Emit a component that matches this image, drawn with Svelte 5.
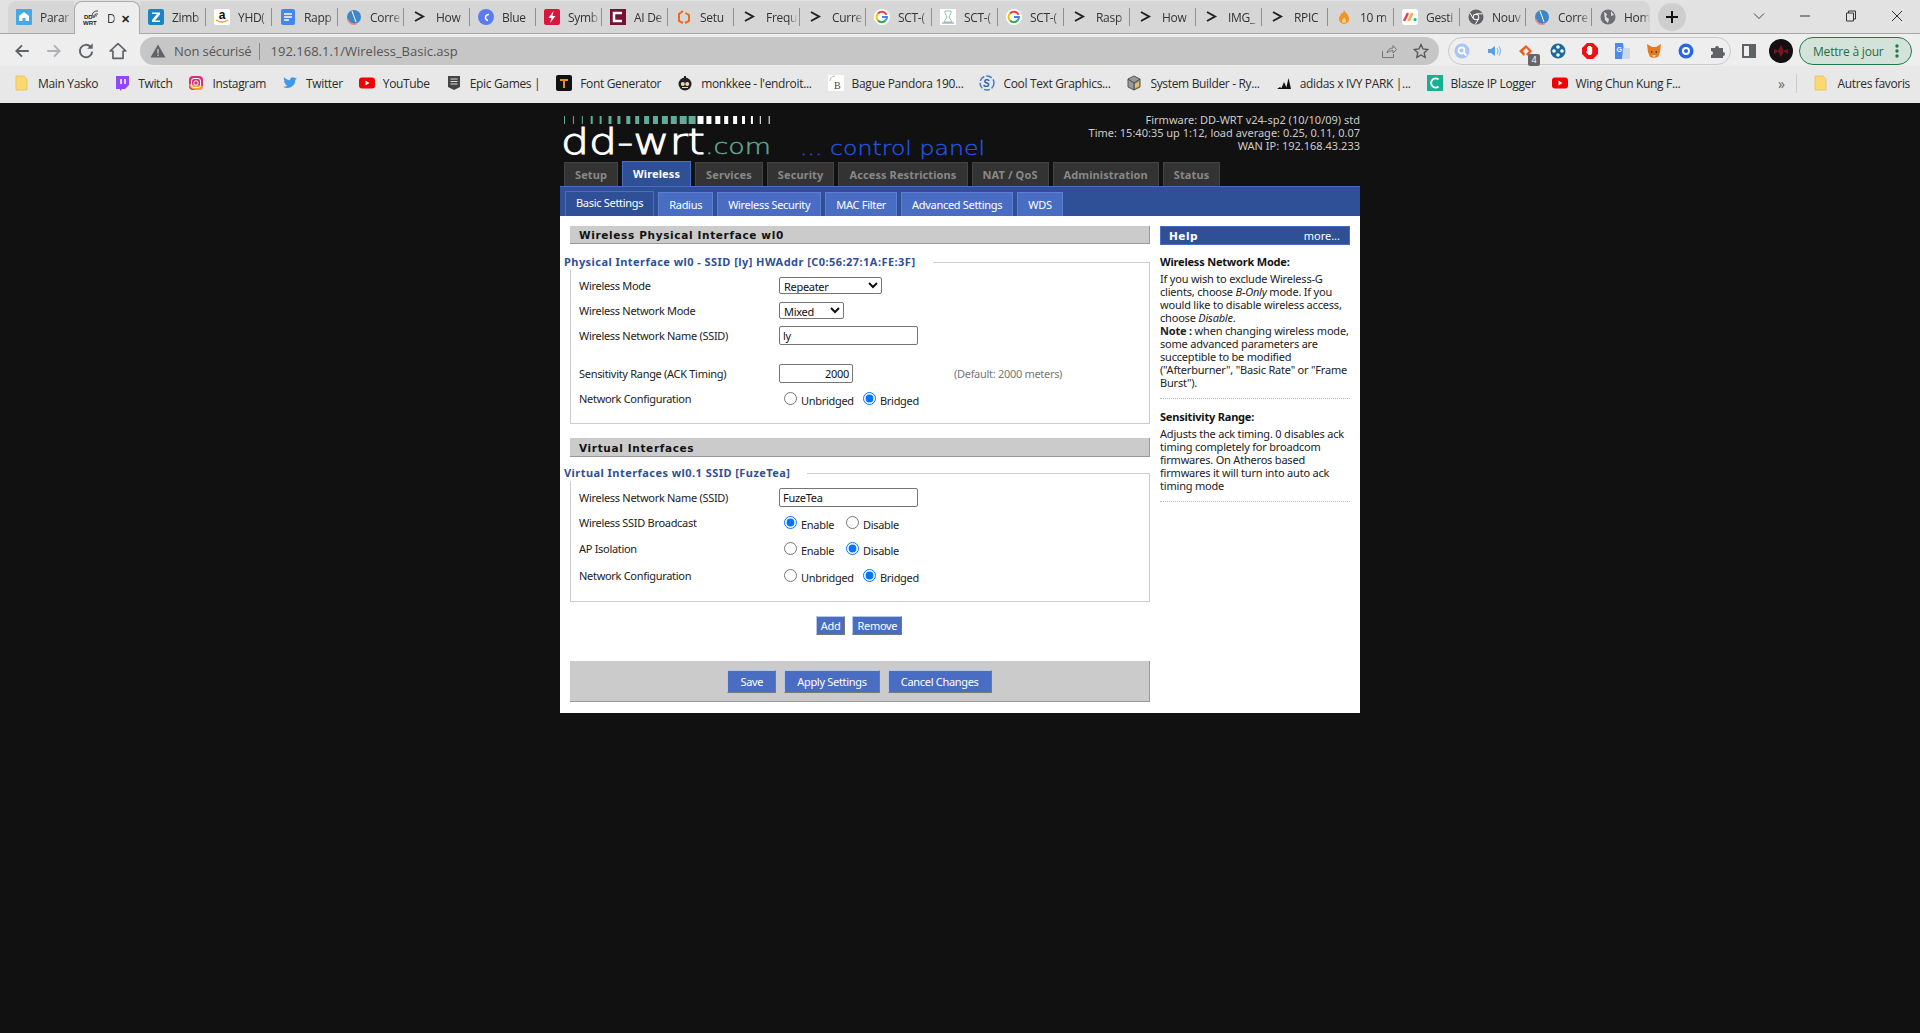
<script>
	const ico = {
		park: '<rect width="16" height="16" rx="1" fill="#49a7e6"/><path d="M8 3l5 4v5H9.500V9h-3v3H3V7z" fill="#fff"/>',
		ddwrt: '<text x="1" y="9" font-size="6" font-weight="700" font-family="Liberation Sans" fill="#222">DD</text><text x="0" y="15" font-size="6" font-weight="700" font-family="Liberation Sans" fill="#222">WRT</text><path d="M9 6a5 5 0 0 1 6-5M10 8a4 4 0 0 1 5-4M11 8a2 2 0 0 1 3-2" stroke="#444" fill="none"/>',
		zimbra: '<rect width="16" height="16" rx="2" fill="#1b85c4"/><path d="M4 3.500h8v2L7 11.500h5V13H4v-2l5-6H4z" fill="#fff"/>',
		amazon: '<rect width="16" height="16" rx="2" fill="#fff"/><text x="8" y="10" text-anchor="middle" font-size="12" font-weight="700" font-family="Liberation Sans" fill="#111">a</text><path d="M2 11q6 4 12 0" stroke="#f59a1c" stroke-width="1.500" fill="none"/>',
		docs: '<rect x="1" width="14" height="16" rx="2" fill="#4285f4"/><path d="M4 5h8M4 8h8M4 11h5" stroke="#fff" stroke-width="1.500"/>',
		corr: '<circle cx="8" cy="8" r="7" fill="#3f86c6"/><path d="M1.500 10a7 7 0 0 0 9 5" stroke="#ef8c94" stroke-width="1.500" fill="none"/><path d="M6 2l4 11" stroke="#fff"/>',
		term: '<path d="M3 3l8 4.500L3 12" stroke="#222" stroke-width="2" fill="none"/>',
		canva: '<circle cx="8" cy="8" r="8" fill="#5a7cf0"/><path d="M11 5.500a3 3 0 1 0-1 6" stroke="#fff" stroke-width="1.500" fill="none"/>',
		symb: '<rect width="16" height="16" rx="2" fill="#d8173f"/><path d="M9.500 2L4.500 9h3L6 14l5.500-7h-3z" fill="#fff"/>',
		ai: '<rect width="16" height="16" fill="#761231"/><path d="M12 4H4v8h8" stroke="#fff" stroke-width="2.500" fill="none"/>',
		setup: '<path d="M7 2L3 5v7l4 2M9.500 4l3.500 2v6l-4 2" stroke="#ee6a1f" stroke-width="2" fill="none"/>',
		g: '<circle cx="8" cy="8" r="8" fill="#fff"/><path d="M12.500 5.800A5 5 0 0 0 4 4.500" stroke="#ea4335" stroke-width="2" fill="none"/><path d="M4 4.500a5 5 0 0 0 0 7" stroke="#fbbc05" stroke-width="2" fill="none"/><path d="M4 11.500a5 5 0 0 0 7.500 0" stroke="#34a853" stroke-width="2" fill="none"/><path d="M11.500 11.500A5 5 0 0 0 13 8H8" stroke="#4285f4" stroke-width="2" fill="none"/>',
		sct: '<rect width="16" height="16" fill="#fff"/><path d="M5 2h6v2L9 8l3 5H4l3-5-2-4z" fill="none" stroke="#8cc4a4"/><path d="M2 14h12" stroke="#88b"/>',
		flame: '<path d="M8 1c1 3 5 4 5 9a5 5 0 0 1-10 0c0-3 2-3 2-6 1 1 2 1 3-3z" fill="#f39325"/><path d="M8 8c1 2 2 2 2 4a2 2 0 0 1-4 0c0-2 2-2 2-4z" fill="#fbd08a"/>',
		monday: '<rect width="16" height="16" rx="3" fill="#fff"/><path d="M2.500 11l3-6" stroke="#e2445c" stroke-width="2.600" stroke-linecap="round"/><path d="M7 11l3-6" stroke="#fdab3d" stroke-width="2.600" stroke-linecap="round"/><circle cx="13" cy="10.500" r="1.600" fill="#00c875"/>',
		chrome: '<circle cx="8" cy="8" r="7.500" fill="#5f6368"/><circle cx="8" cy="8" r="3.200" fill="#fff"/><circle cx="8" cy="8" r="2.300" fill="#5f6368"/><path d="M8 4.800h6.500M5.200 9.600L2 4M10.800 9.600L7.500 15" stroke="#fff"/>',
		globe: '<circle cx="8" cy="8" r="7.500" fill="#6b6f73"/><path d="M4 3l3 2-1 3 3 2-1 4-3-3zM11 2l3 4-3 1z" fill="#ddd"/>',
		folder: '<path d="M2 1h8l3 3v11H2z" fill="#fbd970" stroke="#e4c158" stroke-width=".8"/>',
		twitch: '<path d="M2 1h13v9l-4 4H8l-2 2v-2H2z" fill="#9146ff"/><path d="M7 4v5M11 4v5" stroke="#fff" stroke-width="1.500"/>',
		insta: '<rect x="1" y="1" width="14" height="14" rx="4" fill="#d6307c"/><path d="M1 9a7 7 0 0 0 7 6h3a4 4 0 0 0 4-4z" fill="#f9a13c"/><rect x="3.500" y="3.500" width="9" height="9" rx="2.500" fill="none" stroke="#fff"/><circle cx="8" cy="8" r="2.200" fill="none" stroke="#fff"/>',
		twitter: '<path d="M15 3.500c-.6.300-1 .4-1.600.5.600-.4 1-.9 1.200-1.600-.6.300-1.200.6-1.800.7A2.800 2.800 0 0 0 8 5.200C5.700 5.100 3.600 4 2.200 2.300c-.8 1.300-.4 3 .9 3.800-.5 0-.9-.1-1.300-.4 0 1.400 1 2.500 2.300 2.800-.4.100-.9.100-1.300 0 .4 1.100 1.400 1.900 2.700 2A5.700 5.700 0 0 1 1 11.700 8 8 0 0 0 13.300 4.700c.7-.3 1.200-.7 1.700-1.200z" fill="#3d9ae8"/>',
		youtube: '<rect y="2.500" width="16" height="11" rx="3" fill="#f00000"/><path d="M6.500 5.500v5l4-2.500z" fill="#fff"/>',
		epic: '<path d="M2 1h12v11l-6 3-6-3z" fill="#444"/><path d="M4.500 4h7M4.500 6.500h7M4.500 9h7" stroke="#ddd"/>',
		font: '<rect width="16" height="16" rx="2" fill="#111"/><path d="M4 4h8v2H9v7H7V6H4z" fill="#f08a1d"/>',
		monkkee: '<circle cx="8" cy="9" r="6.500" fill="#222"/><path d="M8 1v3" stroke="#222" stroke-width="2"/><circle cx="5.800" cy="9" r="2" fill="#f0d8b0"/><circle cx="10.200" cy="9" r="2" fill="#f0d8b0"/><path d="M5 12.500h6" stroke="#f0d8b0"/>',
		bague: '<rect width="16" height="16" fill="#fff"/><path d="M2 6a6 5 0 0 1 5-5" stroke="#cbb97c" fill="none"/><text x="6" y="14" font-size="10" font-family="Liberation Serif" fill="#444">B</text>',
		cool: '<circle cx="8" cy="8" r="7" fill="none" stroke="#3f7cc0" stroke-width="1.500" stroke-dasharray="6 2"/><text x="4" y="12" font-size="10" font-style="italic" font-weight="700" font-family="Liberation Sans" fill="#2a62a8">S</text>',
		system: '<path d="M8 1l6 3v8l-6 3-6-3V4z" fill="#9a9a9a" stroke="#555"/><path d="M8 8v7M2 4l6 4 6-4" stroke="#444" fill="none"/><path d="M9 9l4-2v4l-4 2z" fill="#e6c24a"/>',
		adidas: '<path d="M1 14l3-2 2 2zM5 14l3-7 3 7zM10 14L12.500 3 15 14z" fill="#111"/>',
		blasze: '<rect width="16" height="16" fill="#16b092"/><path d="M11.500 4.500a4.500 4.500 0 1 0 0 7" stroke="#fff" stroke-width="2" fill="none"/>'
	};

	const tabs = [
		['park', 'Parar'], ['ddwrt', 'D'], ['zimbra', 'Zimb'], ['amazon', 'YHD('], ['docs', 'Rapp'],
		['corr', 'Corre'], ['term', 'How'], ['canva', 'Blue'], ['symb', 'Symb'], ['ai', 'AI De'],
		['setup', 'Setu'], ['term', 'Frequ'], ['term', 'Curre'], ['g', 'SCT-('], ['sct', 'SCT-('],
		['g', 'SCT-('], ['term', 'Rasp'], ['term', 'How'], ['term', 'IMG_'], ['term', 'RPIC'],
		['flame', '10 m'], ['monday', 'Gesti'], ['chrome', 'Nouv'], ['corr', 'Corre'], ['globe', 'Hom']
	];

	const marks = [
		['folder', 'Main Yasko'], ['twitch', 'Twitch'], ['insta', 'Instagram'], ['twitter', 'Twitter'],
		['youtube', 'YouTube'], ['epic', 'Epic Games |'], ['font', 'Font Generator'], ['monkkee', "monkkee - l'endroit..."],
		['bague', 'Bague Pandora 190...'], ['cool', 'Cool Text Graphics...'], ['system', 'System Builder - Ry...'],
		['adidas', 'adidas x IVY PARK |...'], ['blasze', 'Blasze IP Logger'], ['youtube', 'Wing Chun Kung F...']
	];

	const exts = [
		'<circle cx="8" cy="8" r="7.500" fill="#a9c4f5"/><circle cx="7.500" cy="7.500" r="3" fill="none" stroke="#fff" stroke-width="1.800"/><path d="M10 10l2.500 2.500" stroke="#fff" stroke-width="1.800"/>',
		'<path d="M2 6h3l4-3v10l-4-3H2z" fill="#5a9fe0"/><path d="M11 5q2 3 0 6M13 3.500q3 4.500 0 9" stroke="#8fc0ee" fill="none" stroke-width="1.300"/>',
		'<path d="M8 2l6 6-4 5-2-2 3-3-3-3-3 3 2 3-1 2-5-5z" fill="#ef5a1d"/>',
		'<circle cx="8" cy="8" r="7.500" fill="#1d6a96"/><circle cx="8" cy="4" r="1.800" fill="#fff"/><circle cx="8" cy="12" r="1.800" fill="#fff"/><circle cx="4" cy="8" r="1.800" fill="#fff"/><circle cx="12" cy="8" r="1.800" fill="#fff"/>',
		'<path d="M5 0h6l5 5v6l-5 5H5l-5-5V5z" fill="#e11"/><path d="M5 7V4h1v3-4h1.500v4-4H9v4-3h1.200v6L9 12H6.500L4 9l1-1z" fill="#fff"/>',
		'<path d="M1 0h8l2 16H1z" fill="#4a8af4"/><path d="M9 5h7v11H8z" fill="#cfd8e8"/><text x="2.500" y="9" font-size="7" font-weight="700" font-family="Liberation Sans" fill="#fff">G</text>',
		'<path d="M1 1l5 3h4l5-3-1 8-2 5-4 1-4-1-2-5z" fill="#e8791e"/><path d="M5 8l2 1-2 1zM11 8l-2 1 2 1z" fill="#333"/><path d="M6 12h4l-2 3z" fill="#f5d3b0"/>',
		'<circle cx="8" cy="8" r="7.500" fill="#2567e8"/><circle cx="8" cy="8" r="4" fill="#fff"/><circle cx="8" cy="8" r="2" fill="#2567e8"/>',
		'<path d="M1 5h4a2 2 0 1 1 4 0h4v4a2 2 0 1 1 0 4v2H1v-3a2 2 0 1 0 0-4z" fill="#5f6368"/>'
	];

	const tabNames = [
		{ name: 'Setup' }, { name: 'Wireless', on: true }, { name: 'Services' }, { name: 'Security' },
		{ name: 'Access Restrictions' }, { name: 'NAT / QoS' }, { name: 'Administration' }, { name: 'Status' }
	];
	const subTabs = ['Basic Settings', 'Radius', 'Wireless Security', 'MAC Filter', 'Advanced Settings', 'WDS'];

	// the strip above the logo: teal bars widen, then white ones narrow
	const barWidths = [1, 1, 1, 2, 2, 3, 3, 4, 4, 5, 5, 6, 6, 7, 7, 6, 5, 5, 4, 4, 3, 2, 1, 1];
	const bars = barWidths.map((w, i) => ({ x: 4 + i * 8.9, w, c: i < 15 ? '#62ab96' : '#fff' }));
</script>

<div class="chrome">
	<div class="strip">
		{#each tabs as t, i}
			<div class="tab" class:active={i === 1} class:nosep={i === 0 || i === 1}>
				<svg class="fav" viewBox="0 0 16 16">{@html ico[t[0]]}</svg>
				<span class="tab-title">{t[1]}</span>
				{#if i === 1}<span class="tab-x">✕</span>{/if}
			</div>
		{/each}
		<div class="plus">
			<svg viewBox="0 0 14 14" width="14" height="14"><path d="M7 1v12M1 7h12" stroke="#111" stroke-width="2"/></svg>
		</div>
		<div class="win">
			<svg viewBox="0 0 12 12" width="12" height="12"><path d="M1 3.500l5 5 5-5" stroke="#444" fill="none"/></svg>
			<svg viewBox="0 0 12 12" width="12" height="12"><path d="M1 6h10" stroke="#333"/></svg>
			<svg viewBox="0 0 12 12" width="12" height="12"><path d="M1.500 3h7v8h-7zM3.500 3V1h7v8h-2" stroke="#333" fill="none"/></svg>
			<svg viewBox="0 0 12 12" width="12" height="12"><path d="M1 1l10 10M11 1L1 11" stroke="#333"/></svg>
		</div>
	</div>

	<div class="toolbar">
		<div class="nav">
			<svg viewBox="0 0 16 16"><path d="M14 8H3M8 3L3 8l5 5" stroke="#5f6368" stroke-width="1.700" fill="none"/></svg>
			<svg viewBox="0 0 16 16"><path d="M2 8h11M8 3l5 5-5 5" stroke="#aeb0b3" stroke-width="1.700" fill="none"/></svg>
			<svg viewBox="0 0 16 16"><path d="M13.500 8.500A5.500 5.500 0 1 1 12 4.200" stroke="#5f6368" stroke-width="1.700" fill="none"/><path d="M14 1v5H9z" fill="#5f6368"/></svg>
			<svg viewBox="0 0 16 16"><path d="M8 1.500L1 8h2.500v6.500h9V8H15z" stroke="#5f6368" stroke-width="1.500" stroke-linejoin="round" fill="none"/></svg>
		</div>
		<div class="omni">
			<svg class="warn" viewBox="0 0 16 16"><path d="M8 1.500l7.500 13H.5z" fill="#5f6368"/><path d="M8 6v4.500M8 11.500v1.500" stroke="#c6c6c6" stroke-width="1.400"/></svg>
			<span class="insecure">Non sécurisé</span>
			<span class="url">192.168.1.1/Wireless_Basic.asp</span>
			<svg class="omni-ico share" viewBox="0 0 16 16"><path d="M1.500 8v6.500h11V11M6 10q1-5 6-5V2.500L15.500 6.500 12 10V7.500q-4 0-6 2.500z" stroke="#777" fill="none"/></svg>
			<svg class="omni-ico" viewBox="0 0 16 16"><path d="M8 1.500l2 4.500 4.800.500-3.600 3.200 1 4.800L8 12l-4.200 2.500 1-4.800L1.200 6.500 6 6z" stroke="#555" stroke-width="1.300" fill="none"/></svg>
		</div>
		<div class="ext-pill">
			{#each exts as e, i}
				<span class="ext">
					<svg viewBox="0 0 16 16">{@html e}</svg>
					{#if i === 2}<b class="ext-badge">4</b>{/if}
				</span>
			{/each}
		</div>
		<svg class="panel" viewBox="0 0 14 14"><path d="M0 0h14v14H0zM2 2v10h5V2z" fill="#5f6368" fill-rule="evenodd"/></svg>
		<svg class="avatar" viewBox="0 0 24 24"><circle cx="12" cy="12" r="12" fill="#141012"/><path d="M12 6l3 6-3 6-3-6zM5 10l5 2-5 3zM19 10l-5 2 5 3z" fill="#7a1420"/></svg>
		<div class="update">
			<span>Mettre à jour</span>
			<svg viewBox="0 0 4 16" width="4" height="16"><circle cx="2" cy="3" r="1.700" fill="#1e7a46"/><circle cx="2" cy="8" r="1.700" fill="#1e7a46"/><circle cx="2" cy="13" r="1.700" fill="#1e7a46"/></svg>
		</div>
	</div>

	<div class="marks">
		{#each marks as m}
			<div class="mark">
				<svg viewBox="0 0 16 16">{@html ico[m[0]]}</svg>
				<span>{m[1]}</span>
			</div>
		{/each}
		<span class="more-marks">»</span>
		<div class="mark other">
			<svg viewBox="0 0 16 16">{@html ico.folder}</svg>
			<span>Autres favoris</span>
		</div>
	</div>
</div>

<div class="page">
	<div class="header">
		<svg class="logo" viewBox="0 0 430 58" width="430" height="58">
			{#each bars as b}<rect x={b.x} y="13" width={b.w} height="8" fill={b.c} />{/each}
			<text x="1" y="51" class="logo-dd" textLength="144" lengthAdjust="spacingAndGlyphs">dd-wrt</text>
			<text x="145" y="51" class="logo-com" textLength="66" lengthAdjust="spacingAndGlyphs">.com</text>
			<text x="240" y="52" class="logo-cp" textLength="185" lengthAdjust="spacingAndGlyphs">... control panel</text>
		</svg>
		<div class="info">
			<div>Firmware: DD-WRT v24-sp2 (10/10/09) std</div>
			<div>Time: 15:40:35 up 1:12, load average: 0.25, 0.11, 0.07</div>
			<div>WAN IP: 192.168.43.233</div>
		</div>
	</div>

	<div class="main-tabs">
		{#each tabNames as t}
			<div class="main-tab" class:on={t.on}>{t.name}</div>
		{/each}
	</div>
	<div class="sub-tabs">
		{#each subTabs as s, i}
			<div class="sub-tab" class:on={i === 0}>{s}</div>
		{/each}
	</div>

	<div class="body">
		<div class="content">
			<h2>Wireless Physical Interface wl0</h2>
			<fieldset class="fs-phy">
				<legend>Physical Interface wl0 - SSID [ly] HWAddr [C0:56:27:1A:FE:3F]</legend>
				<div class="row">
					<label>Wireless Mode</label>
					<select class="sel-mode"><option>Repeater</option></select>
				</div>
				<div class="row">
					<label>Wireless Network Mode</label>
					<select class="sel-net"><option>Mixed</option></select>
				</div>
				<div class="row">
					<label>Wireless Network Name (SSID)</label>
					<input class="txt" type="text" value="ly" />
				</div>
				<div class="row gap-top">
					<label>Sensitivity Range (ACK Timing)</label>
					<input class="num" type="text" value="2000" />
					<span class="hint">(Default: 2000 meters)</span>
				</div>
				<div class="row radios">
					<label>Network Configuration</label>
					<input type="radio" name="a" /><span class="opt o1">Unbridged</span>
					<input type="radio" name="a" checked /><span class="opt">Bridged</span>
				</div>
			</fieldset>

			<h2 class="h-virt">Virtual Interfaces</h2>
			<fieldset class="fs-virt">
				<legend>Virtual Interfaces wl0.1 SSID [FuzeTea]</legend>
				<div class="row">
					<label>Wireless Network Name (SSID)</label>
					<input class="txt" type="text" value="FuzeTea" />
				</div>
				<div class="row radios">
					<label>Wireless SSID Broadcast</label>
					<input type="radio" name="b" checked /><span class="opt o2">Enable</span>
					<input type="radio" name="b" /><span class="opt">Disable</span>
				</div>
				<div class="row radios tall">
					<label>AP Isolation</label>
					<input type="radio" name="c" /><span class="opt o2">Enable</span>
					<input type="radio" name="c" checked /><span class="opt">Disable</span>
				</div>
				<div class="row radios tall">
					<label>Network Configuration</label>
					<input type="radio" name="d" /><span class="opt o1">Unbridged</span>
					<input type="radio" name="d" checked /><span class="opt">Bridged</span>
				</div>
			</fieldset>

			<div class="add-row">
				<button class="btn small">Add</button>
				<button class="btn small">Remove</button>
			</div>
			<div class="save-bar">
				<button class="btn big">Save</button>
				<button class="btn big">Apply Settings</button>
				<button class="btn big">Cancel Changes</button>
			</div>
		</div>

		<aside class="help">
			<div class="help-head"><b>Help</b><span>more...</span></div>
			<dl>
				<dt>Wireless Network Mode:</dt>
				<dd>If you wish to exclude Wireless-G clients, choose <i>B-Only</i> mode. If you would like to disable wireless access, choose <i>Disable</i>.<br /><b>Note :</b> when changing wireless mode, some advanced parameters are succeptible to be modified ("Afterburner", "Basic Rate" or "Frame Burst").</dd>
				<dt>Sensitivity Range:</dt>
				<dd>Adjusts the ack timing. 0 disables ack timing completely for broadcom firmwares. On Atheros based firmwares it will turn into auto ack timing mode</dd>
			</dl>
		</aside>
	</div>
</div>

<style>
	:global(body) {
		margin: 0;
		background: #111;
		overflow: hidden;
		font-family: "Noto Sans", sans-serif;
	}
	.chrome {
		height: 103px;
		background: #e8e8e8;
		font-family: "Open Sans", sans-serif;
		color: #333;
	}
	.strip {
		height: 33px;
		background: #e2e2e2;
		border-bottom: 1px solid #a8a8a8;
		display: flex;
		padding-left: 8px;
	}
	.tab {
		width: 66px;
		box-sizing: border-box;
		height: 32px;
		margin-top: 1px;
		display: flex;
		align-items: center;
		padding-left: 8px;
		gap: 8px;
		font-size: 12px;
		position: relative;
		background: #d6d6d6;
	}
	.tab:first-child { border-radius: 8px 0 0 0; }
	.tab:nth-child(25) { border-radius: 0 8px 0 0; width: 58px; }
	.tab:nth-child(25) .tab-title { margin-right: 0; }
	.tab::after {
		content: "";
		position: absolute;
		right: 0;
		top: 7px;
		bottom: 7px;
		width: 1px;
		background: #8f8f8f;
	}
	.tab.nosep::after, .tab:nth-child(25)::after { display: none; }
	.tab.active {
		background: #eee;
		height: 33px;
		border: 1px solid #aaa;
		border-bottom: 0;
		border-radius: 8px 8px 0 0;
		z-index: 1;
	}
	.fav { width: 16px; height: 16px; flex: none; }
	.tab-title {
		flex: 1;
		min-width: 0;
		overflow: hidden;
		white-space: nowrap;
		-webkit-mask-image: linear-gradient(90deg, #000 70%, transparent);
		mask-image: linear-gradient(90deg, #000 70%, transparent);
		margin-right: 2px;
		letter-spacing: -0.3px;
	}
	.tab-x { font-size: 11px; font-weight: 700; color: #222; }
	.active .tab-title { flex: 0 0 9px; margin-right: -3px; }
	.plus {
		width: 28px;
		height: 28px;
		border-radius: 50%;
		background: #cecece;
		margin: 3px 0 0 8px;
		display: flex;
		align-items: center;
		justify-content: center;
	}
	.win {
		margin-left: auto;
		display: flex;
		gap: 34px;
		padding: 10px 17px 0 0;
		height: 12px;
	}
	.toolbar {
		height: 32px;
		background: #eee;
		display: flex;
		align-items: center;
		padding-top: 2px;
		box-sizing: border-box;
	}
	.nav {
		display: flex;
		gap: 14px;
		padding-left: 13px;
		width: 140px;
		box-sizing: border-box;
		flex: none;
	}
	.nav svg { width: 18px; height: 18px; }
	.omni {
		width: 1299px;
		height: 28px;
		box-sizing: border-box;
		background: #c6c6c6;
		border-radius: 14px;
		display: flex;
		align-items: center;
		font-size: 13px;
		padding: 0 10px;
		color: #555;
		flex: none;
	}
	.warn { width: 16px; height: 16px; margin-right: 8px; }
	.insecure { padding-right: 7px; border-right: 1px solid #888; line-height: 17px; letter-spacing: -0.1px; }
	.url { margin-left: 11px; flex: 1; }
	.omni-ico { width: 16px; height: 16px; }
	.omni-ico.share { margin-right: 16px; }
	.ext-pill {
		margin-left: 9px;
		width: 283px;
		height: 28px;
		box-sizing: border-box;
		border: 1px solid #c9c9c9;
		border-radius: 14px;
		display: flex;
		align-items: center;
		padding-left: 5px;
		gap: 16px;
		flex: none;
	}
	.ext { position: relative; width: 16px; height: 16px; flex: none; }
	.ext svg { width: 16px; height: 16px; display: block; }
	.ext-badge {
		position: absolute;
		right: -6px;
		bottom: -7px;
		width: 12px;
		height: 12px;
		background: #666;
		color: #fff;
		font-size: 9px;
		font-weight: 400;
		border-radius: 2px;
		text-align: center;
		line-height: 12px;
	}
	.panel { width: 14px; height: 14px; margin-left: 11px; flex: none; }
	.avatar { width: 24px; height: 24px; margin-left: 13px; flex: none; }
	.update {
		margin-left: 6px;
		width: 113px;
		height: 28px;
		box-sizing: border-box;
		border: 1px solid #1e7a46;
		border-radius: 14px;
		background: #d4e3da;
		color: #1f6b42;
		font-size: 12px;
		display: flex;
		align-items: center;
		justify-content: space-between;
		padding: 0 12px 0 13px;
		letter-spacing: -0.2px;
		flex: none;
	}
	.marks {
		height: 37px;
		background: #e8e8e8;
		display: flex;
		align-items: center;
		padding: 0 0 3px 14px;
		box-sizing: border-box;
		gap: 16px;
		font-size: 12px;
		letter-spacing: -0.34px;
		color: #2b2b2b;
	}
	.mark { display: flex; align-items: center; gap: 8px; white-space: nowrap; }
	.mark svg { width: 16px; height: 16px; flex: none; }
	.more-marks { margin-left: auto; color: #666; font-size: 14px; padding-right: 12px; border-right: 1px solid #ccc; }
	.other { padding-right: 10px; }

	.page {
		width: 800px;
		margin: 0 auto;
		font-size: 11px;
		color: #111;
	}
	.header {
		height: 58px;
		display: flex;
		justify-content: space-between;
	}
	.logo { display: block; flex: none; }
	.logo-dd { font-family: "DejaVu Sans", sans-serif; font-weight: 200; font-size: 35px; fill: #fff; stroke: #fff; stroke-width: 1px; }
	.logo-com { font-family: "DejaVu Sans", sans-serif; font-weight: 200; font-size: 21px; fill: #62ab96; stroke: #62ab96; stroke-width: 0.4px; }
	.logo-cp { font-family: "DejaVu Sans", sans-serif; font-weight: 200; font-size: 20px; fill: #2158e6; stroke: #2158e6; stroke-width: 0.3px; }
	.info {
		text-align: right;
		color: #ccc;
		line-height: 13px;
		padding-top: 10px;
		white-space: nowrap;
	}
	.main-tabs {
		display: flex;
		align-items: flex-end;
		gap: 4px;
		padding-left: 4px;
		height: 25px;
	}
	.main-tab {
		height: 24px;
		box-sizing: border-box;
		background: #333;
		border: 1px solid #444;
		border-bottom: 0;
		color: #888;
		font-weight: 700;
		letter-spacing: 0.11px;
		padding: 0 10px;
		line-height: 24px;
	}
	.main-tab.on {
		height: 25px;
		background: #2f5096;
		border-color: #4a6dc4;
		color: #fff;
		line-height: 23px;
	}
	.sub-tabs {
		height: 30px;
		box-sizing: border-box;
		background: #2f5096;
		border-top: 1px solid #4a6dc4;
		padding: 5px 0 0 5px;
		display: flex;
		align-items: flex-end;
		gap: 4px;
		letter-spacing: -0.3px;
	}
	.sub-tab {
		height: 24px;
		box-sizing: border-box;
		background: #4a6dc4;
		border: 1px solid #5d7fd0;
		border-bottom: 0;
		color: #fff;
		padding: 0 10px;
		line-height: 24px;
	}
	.sub-tab.on {
		height: 25px;
		background: #2f5096;
		border-color: #4a6dc4;
		line-height: 22px;
	}
	.body {
		height: 497px;
		box-sizing: border-box;
		background: #fff;
		display: flex;
		padding: 10px 10px 0;
		gap: 10px;
	}
	.content { width: 580px; flex: none; }
	h2 {
		margin: 0;
		height: 18px;
		box-sizing: border-box;
		background: #cbcbcb;
		border-right: 1px solid #999;
		border-bottom: 1px solid #999;
		font-family: "DejaVu Sans", sans-serif;
		font-size: 10.500px;
		font-weight: 700;
		letter-spacing: 0.65px;
		line-height: 19px;
		padding-left: 9px;
		color: #111;
	}
	.h-virt { margin-top: 14px; height: 19px; line-height: 21px; }
	fieldset {
		margin: 11px 0 0;
		padding: 3px 8px 0;
		border: 1px solid #ccc;
		min-width: 0;
		box-sizing: border-box;
	}
	.fs-phy { height: 169px; }
	.fs-virt { margin-top: 9px; height: 136px; padding-top: 4px; }
	legend {
		color: #2f5096;
		font-weight: 700;
		letter-spacing: 0.45px;
		padding: 0 17px 2px 0;
		margin-left: -15px;
		line-height: 13px;
	}
	.row {
		display: flex;
		align-items: center;
		height: 25px;
		letter-spacing: -0.3px;
	}
	.row label { width: 200px; flex: none; color: #222; }
	.row.gap-top { margin-top: 13px; }
	.row.tall { height: 27px; }
	select, input[type="text"] {
		font: inherit;
		letter-spacing: inherit;
		color: #111;
		background: #fff;
		border: 1px solid #767676;
		box-sizing: border-box;
		margin: 0;
	}
	select { height: 17px; border-radius: 2px; padding: 0; }
	.sel-mode { width: 103px; }
	.sel-net { width: 65px; }
	input[type="text"] { height: 19px; border-radius: 2px; padding: 0 3px; }
	.txt { width: 139px; }
	.num { width: 74px; text-align: right; }
	.hint { margin-left: 101px; color: #777; }
	input[type="radio"] {
		margin: 0 0 1px 5px;
		width: 13px;
		height: 13px;
		accent-color: #0075ff;
		flex: none;
	}
	.opt { margin-left: 4px; padding-top: 3px; color: #222; }
	.o1 { width: 62px; }
	.o2 { width: 45px; }
	.opt + input[type="radio"] { margin-left: 0; }
	.add-row {
		display: flex;
		justify-content: center;
		gap: 7px;
		margin-top: 14px;
		padding-right: 2px;
		height: 19px;
		letter-spacing: -0.3px;
	}
	.btn {
		font: inherit;
		letter-spacing: -0.3px;
		color: #fff;
		background: #4a6dc4;
		box-sizing: border-box;
		border: 1px solid;
		border-color: #b9c6e8 #777 #777 #b9c6e8;
		margin: 0;
	}
	.btn.small { height: 19px; padding: 0 4px; }
	.save-bar {
		margin-top: 26px;
		height: 41px;
		box-sizing: border-box;
		background: #cbcbcb;
		border-right: 1px solid #999;
		border-bottom: 1px solid #999;
		display: flex;
		justify-content: center;
		gap: 8px;
		padding-top: 9px;
	}
	.btn.big { height: 23px; padding: 0 12px; }
	.help { width: 190px; flex: none; }
	.help-head {
		height: 19px;
		box-sizing: border-box;
		background: #2f5096;
		border: 1px solid #4a6dc4;
		color: #fff;
		display: flex;
		justify-content: space-between;
		align-items: center;
		padding: 0 9px 0 8px;
	}
	.help-head b { font-family: "DejaVu Sans", sans-serif; font-size: 10.500px; letter-spacing: 0.5px; }
	dl { margin: 9px 0 0; letter-spacing: -0.2px; }
	dt { font-weight: 700; color: #111; line-height: 15px; }
	dd {
		margin: 2px 0 10px;
		line-height: 13px;
		padding: 1px 0 9px;
		border-bottom: 1px dotted #bbb;
		color: #222;
	}
</style>
